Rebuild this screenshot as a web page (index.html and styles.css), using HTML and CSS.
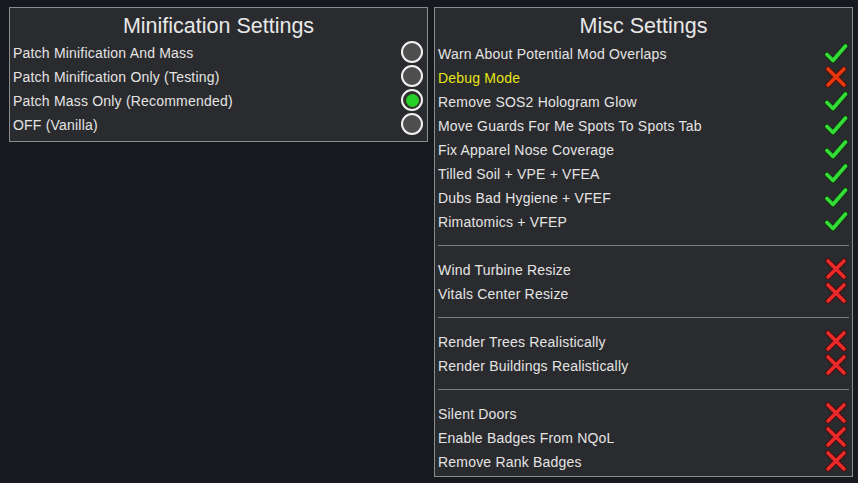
FILE: index.html
```html
<!DOCTYPE html>
<html>
<head>
<meta charset="utf-8">
<link rel="stylesheet" href="styles.css">
</head>
<body>
<svg width="0" height="0" class="defs">
  <defs>
    <symbol id="chk" viewBox="0 0 24 24">
      <polyline points="3,13.5 9,19.5 21.5,5" fill="none" stroke="#0d3a0d" stroke-width="5.5" stroke-linecap="round" stroke-linejoin="round"/>
      <polyline points="3,13.5 9,19.5 21.5,5" fill="none" stroke="#35dc35" stroke-width="3.6" stroke-linecap="round" stroke-linejoin="round"/>
    </symbol>
    <symbol id="crs" viewBox="0 0 24 24">
      <path d="M4 4 L20 20 M20 4 L4 20" fill="none" stroke="#4a0e0e" stroke-width="5.4" stroke-linecap="round"/>
      <path d="M4 4 L20 20 M20 4 L4 20" fill="none" stroke="#e82a2a" stroke-width="3.6" stroke-linecap="round"/>
    </symbol>
    <symbol id="crs2" viewBox="0 0 24 24">
      <path d="M4 4 L20 20 M20 4 L4 20" fill="none" stroke="#4a140a" stroke-width="5.4" stroke-linecap="round"/>
      <path d="M4 4 L20 20 M20 4 L4 20" fill="none" stroke="#e8360e" stroke-width="3.6" stroke-linecap="round"/>
    </symbol>
  </defs>
</svg>
<div class="page">
  <section class="panel panel-left">
    <h2 class="title">Minification Settings</h2>
    <div class="row"><span class="label">Patch Minification And Mass</span><span class="radio"></span></div>
    <div class="row"><span class="label">Patch Minification Only (Testing)</span><span class="radio"></span></div>
    <div class="row"><span class="label">Patch Mass Only (Recommended)</span><span class="radio on"></span></div>
    <div class="row"><span class="label">OFF (Vanilla)</span><span class="radio"></span></div>
  </section>
  <section class="panel panel-right">
    <h2 class="title">Misc Settings</h2>
    <div class="row"><span class="label">Warn About Potential Mod Overlaps</span><svg class="icon"><use href="#chk"/></svg></div>
    <div class="row"><span class="label debug">Debug Mode</span><svg class="icon"><use href="#crs2"/></svg></div>
    <div class="row"><span class="label">Remove SOS2 Hologram Glow</span><svg class="icon"><use href="#chk"/></svg></div>
    <div class="row"><span class="label">Move Guards For Me Spots To Spots Tab</span><svg class="icon"><use href="#chk"/></svg></div>
    <div class="row"><span class="label">Fix Apparel Nose Coverage</span><svg class="icon"><use href="#chk"/></svg></div>
    <div class="row"><span class="label">Tilled Soil + VPE + VFEA</span><svg class="icon"><use href="#chk"/></svg></div>
    <div class="row"><span class="label">Dubs Bad Hygiene + VFEF</span><svg class="icon"><use href="#chk"/></svg></div>
    <div class="row"><span class="label">Rimatomics + VFEP</span><svg class="icon"><use href="#chk"/></svg></div>
    <div class="sep"></div>
    <div class="row"><span class="label">Wind Turbine Resize</span><svg class="icon"><use href="#crs"/></svg></div>
    <div class="row"><span class="label">Vitals Center Resize</span><svg class="icon"><use href="#crs"/></svg></div>
    <div class="sep"></div>
    <div class="row"><span class="label">Render Trees Realistically</span><svg class="icon"><use href="#crs"/></svg></div>
    <div class="row"><span class="label">Render Buildings Realistically</span><svg class="icon"><use href="#crs"/></svg></div>
    <div class="sep"></div>
    <div class="row"><span class="label">Silent Doors</span><svg class="icon"><use href="#crs"/></svg></div>
    <div class="row"><span class="label">Enable Badges From NQoL</span><svg class="icon"><use href="#crs"/></svg></div>
    <div class="row"><span class="label">Remove Rank Badges</span><svg class="icon"><use href="#crs"/></svg></div>
  </section>
</div>
</body>
</html>
```
FILE: styles.css
```css
html, body {
  margin: 0;
  padding: 0;
  background: #16191d;
  width: 858px;
  height: 483px;
  overflow: hidden;
  font-family: "Liberation Sans", Arial, sans-serif;
  color: #e4e4e4;
}
.defs { position: absolute; width: 0; height: 0; }
.page {
  display: flex;
  align-items: flex-start;
  gap: 6px;
  padding: 7px 0 0 9px;
}
.panel {
  box-sizing: border-box;
  width: 419px;
  background: #2a2b2e;
  border: 1px solid #8c8c8c;
  padding: 0 3px;
}
.panel-left { height: 135px; }
.panel-right { height: 470px; }
.title {
  margin: 0;
  font-weight: normal;
  font-size: 21.5px;
  text-align: center;
  height: 32px;
  line-height: 36px;
  color: #e8e8e8;
}
.panel-right .title { height: 33px; }
.row {
  display: flex;
  align-items: center;
  justify-content: space-between;
  height: 24px;
}
.label {
  font-size: 14px;
  letter-spacing: 0.2px;
  white-space: nowrap;
  padding-top: 1px;
}
.label.debug { color: #e6e619; }
.radio {
  box-sizing: border-box;
  width: 22px;
  height: 22px;
  border-radius: 50%;
  border: 2px solid #f2f2f2;
  background: #4e4e4e;
  margin-right: 1px;
  display: flex;
  align-items: center;
  justify-content: center;
}
.radio.on { background: #2f2f2f; }
.radio.on::after {
  content: "";
  width: 13px;
  height: 13px;
  border-radius: 50%;
  background: #26d026;
}
.icon {
  width: 24px;
  height: 24px;
  margin-right: 1px;
}
.sep {
  height: 24px;
  display: flex;
  align-items: center;
}
.sep::before {
  content: "";
  flex: 1;
  height: 1px;
  background: #7e7e7e;
  margin-top: 1px;
}
```
